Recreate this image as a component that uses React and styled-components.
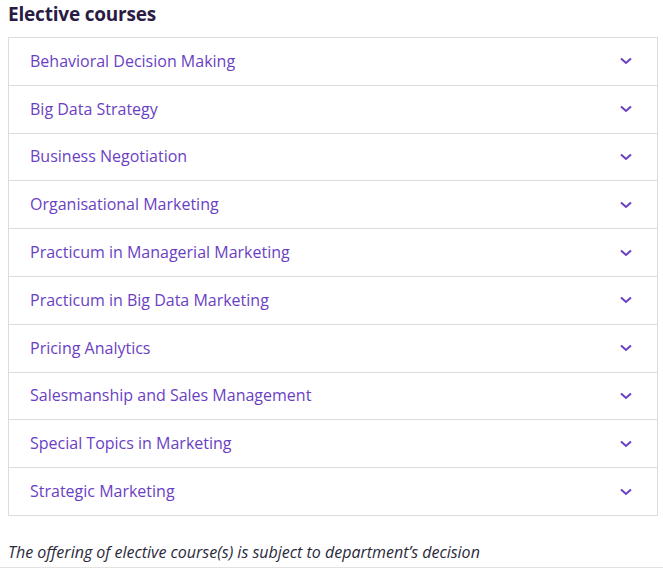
import styled, { createGlobalStyle } from "styled-components";

const courses = [
  "Behavioral Decision Making",
  "Big Data Strategy",
  "Business Negotiation",
  "Organisational Marketing",
  "Practicum in Managerial Marketing",
  "Practicum in Big Data Marketing",
  "Pricing Analytics",
  "Salesmanship and Sales Management",
  "Special Topics in Marketing",
  "Strategic Marketing",
];

const Chevron = () => (
  <svg width="12" height="8" viewBox="0 0 12 8" fill="none">
    <path d="M1 1.5 L6 6 L11 1.5" stroke="#6a3fc4" strokeWidth="2" />
  </svg>
);

const App = () => {
  return (
    <>
      <GlobalStyle />
      <Page>
        <Title>Elective courses</Title>
        <List>
          {courses.map((c) => (
            <Row key={c}>
              <Label>{c}</Label>
              <Chevron />
            </Row>
          ))}
        </List>
        <Note>The offering of elective course(s) is subject to department’s decision</Note>
      </Page>
    </>
  );
};

export default App;

/* ---------------------------- STYLED COMPONENTS --------------------------- */

const GlobalStyle = createGlobalStyle`
  body {
    margin: 0;
    background: #fff;
    font-family: "Open Sans", "Noto Sans", sans-serif;
  }
`;

const Page = styled.div`
  padding: 0 5px 0 8px;
  border-bottom: 1px solid #e2e2e2;
`;

const Title = styled.h2`
  margin: 0;
  padding-top: 1px;
  height: 36px;
  font-size: 19px;
  font-weight: 700;
  color: #2a1b45;
  letter-spacing: -0.2px;
`;

const List = styled.div`
  border: 1px solid #dcdcdc;
`;

const Row = styled.div`
  display: flex;
  align-items: center;
  justify-content: space-between;
  height: 46.8px;
  padding: 0 25px 0 21px;
  border-top: 1px solid #dcdcdc;
  &:first-child {
    border-top: none;
  }
`;

const Label = styled.span`
  font-size: 16px;
  color: #6a3fc4;
  padding-bottom: 1px;
`;

const Note = styled.p`
  margin: 0;
  padding: 25px 0 4px;
  font-size: 16px;
  font-style: italic;
  color: #2a2a3a;
`;
